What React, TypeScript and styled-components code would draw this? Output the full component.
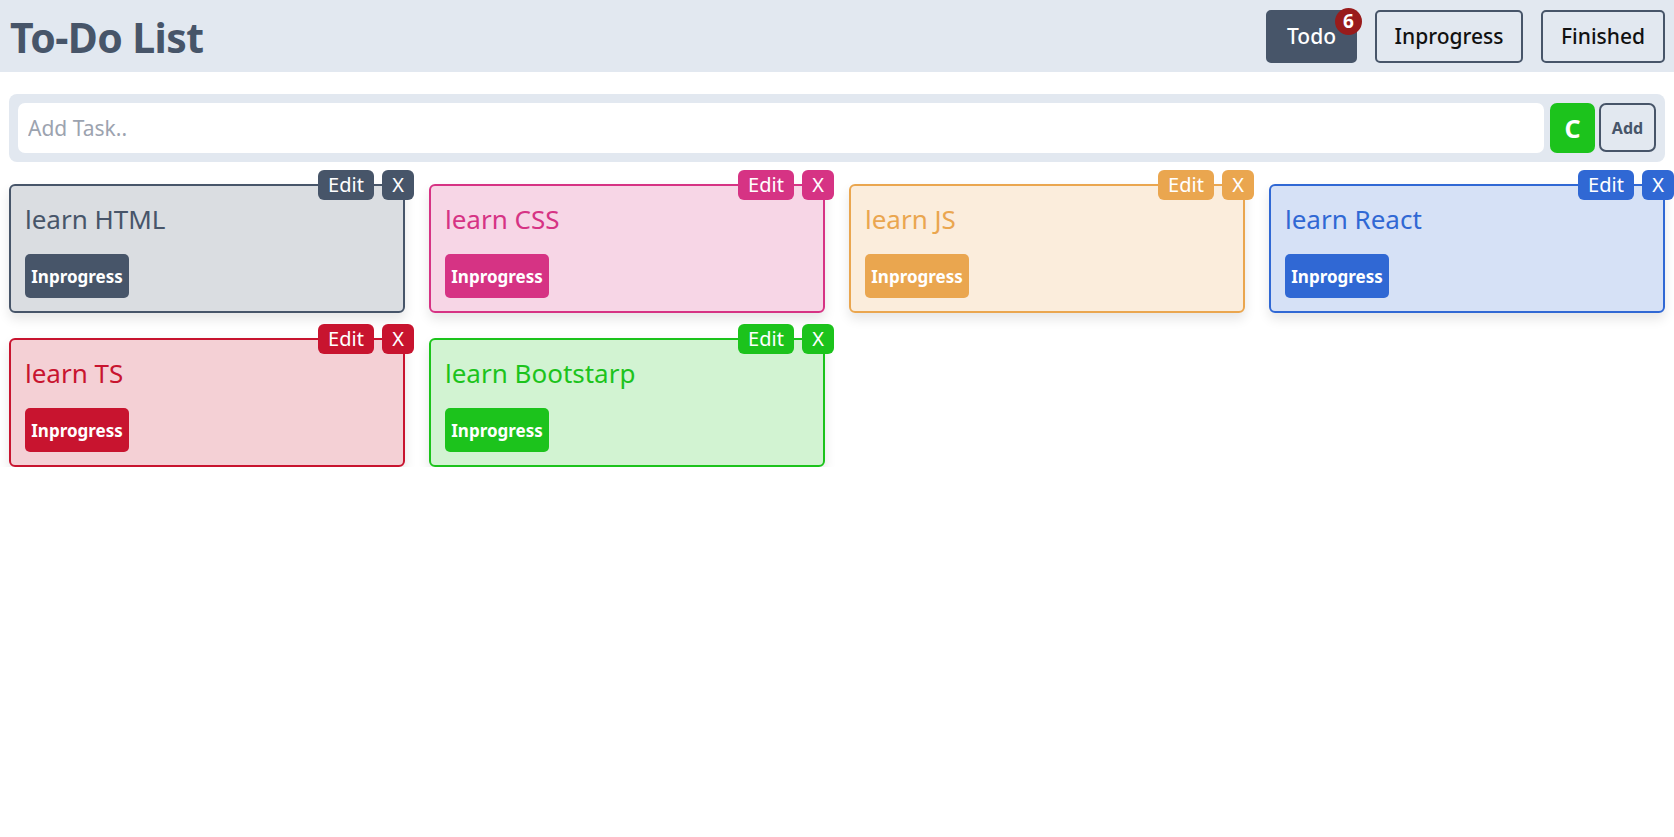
import React from "react";
import styled, { createGlobalStyle } from "styled-components";

const GlobalStyle = createGlobalStyle`
  * { box-sizing: border-box; }
  body {
    margin: 0;
    background: #ffffff;
    font-family: "Noto Sans", "Open Sans", Arial, sans-serif;
    color: #1f2937;
  }
`;

const Header = styled.header`
  height: 72px;
  background: #e2e8f0;
  display: flex;
  align-items: center;
  justify-content: space-between;
  padding: 0 9px 0 10px;
`;

const Title = styled.h1`
  margin: 0;
  font-size: 41px;
  font-weight: 700;
  color: #475569;
  letter-spacing: -0.6px;
  line-height: 1;
  padding-top: 2px;
`;

const Nav = styled.nav`
  display: flex;
  gap: 18px;
  align-items: center;
`;

const NavButton = styled.button<{ $active?: boolean; $w: number }>`
  position: relative;
  width: ${(p) => p.$w}px;
  height: 53px;
  border: 2px solid #475569;
  border-radius: 5px;
  background: ${(p) => (p.$active ? "#475569" : "transparent")};
  color: ${(p) => (p.$active ? "#ffffff" : "#111111")};
  font-family: inherit;
  font-size: 21px;
  font-weight: 500;
  padding: 0;
  display: flex;
  align-items: center;
  justify-content: center;
  cursor: pointer;
`;

const Badge = styled.span`
  position: absolute;
  top: -4px;
  right: -7px;
  width: 27px;
  height: 27px;
  border-radius: 50%;
  background: #991b1b;
  color: #fff;
  font-size: 19px;
  font-weight: 700;
  display: flex;
  align-items: center;
  justify-content: center;
  line-height: 1;
`;

const Main = styled.main`
  padding: 22px 9px 0 9px;
`;

const Form = styled.form`
  height: 68px;
  background: #e2e8f0;
  border-radius: 8px;
  padding: 9px;
  display: flex;
  align-items: stretch;
`;

const Input = styled.input`
  flex: 1;
  border: none;
  outline: none;
  border-radius: 7px;
  background: #ffffff;
  font-family: inherit;
  font-size: 21px;
  padding: 0 10px;
  color: #1f2937;
  &::placeholder {
    color: #9ca3af;
  }
`;

const ColorButton = styled.button`
  margin-left: 6px;
  width: 45px;
  border: none;
  border-radius: 7px;
  background: #1cc31c;
  color: #fff;
  font-family: inherit;
  font-size: 25px;
  font-weight: 700;
  padding: 0;
`;

const AddButton = styled.button`
  margin-left: 4px;
  width: 57px;
  height: 49px;
  border: 2px solid #475569;
  border-radius: 7px;
  background: #e2e8f0;
  color: #475569;
  font-family: inherit;
  font-size: 16px;
  font-weight: 700;
  padding: 0;
`;

const Grid = styled.section`
  margin-top: 22px;
  display: grid;
  grid-template-columns: repeat(4, 396px);
  column-gap: 24px;
  row-gap: 25px;
  align-items: start;
`;

const Card = styled.article<{ $c: string }>`
  position: relative;
  height: 129px;
  border: 2px solid ${(p) => p.$c};
  border-radius: 6px;
  background: ${(p) => p.$c}33;
  box-shadow: 0 6px 12px rgba(0, 0, 0, 0.1);
  padding: 14px 14px 13px 14px;
  display: flex;
  flex-direction: column;
  align-items: flex-start;
`;

const CardTitle = styled.h3<{ $c: string }>`
  margin: 0;
  font-size: 26px;
  font-weight: 400;
  line-height: 38px;
  color: ${(p) => p.$c};
`;

const StatusButton = styled.button<{ $c: string }>`
  margin-top: auto;
  width: 104px;
  height: 44px;
  border: none;
  border-radius: 5px;
  background: ${(p) => p.$c};
  color: #fff;
  font-family: inherit;
  font-size: 17px;
  font-weight: 700;
  padding: 0;
`;

const Actions = styled.div`
  position: absolute;
  top: -16px;
  right: -11px;
  display: flex;
  gap: 8px;
`;

const ActionButton = styled.button<{ $c: string; $w: number }>`
  width: ${(p) => p.$w}px;
  height: 30px;
  border: none;
  border-radius: 6px;
  background: ${(p) => p.$c};
  color: #fff;
  font-family: inherit;
  font-size: 20px;
  font-weight: 400;
  padding: 0;
  line-height: 1;
  display: flex;
  align-items: center;
  justify-content: center;
`;

type Task = { id: number; text: string; color: string };

const tasks: Task[] = [
  { id: 1, text: "learn HTML", color: "#475569" },
  { id: 2, text: "learn CSS", color: "#d63384" },
  { id: 3, text: "learn JS", color: "#eaa64f" },
  { id: 4, text: "learn React", color: "#3068d4" },
  { id: 5, text: "learn TS", color: "#c8142f" },
  { id: 6, text: "learn Bootstarp", color: "#1cc31c" },
];

export default function App() {
  return (
    <>
      <GlobalStyle />
      <Header>
        <Title>To-Do List</Title>
        <Nav>
          <NavButton $active $w={91}>
            Todo
            <Badge>6</Badge>
          </NavButton>
          <NavButton $w={148}>Inprogress</NavButton>
          <NavButton $w={124}>Finished</NavButton>
        </Nav>
      </Header>
      <Main>
        <Form onSubmit={(e) => e.preventDefault()}>
          <Input placeholder="Add Task.." />
          <ColorButton type="button">C</ColorButton>
          <AddButton type="submit">Add</AddButton>
        </Form>
        <Grid>
          {tasks.map((t) => (
            <Card key={t.id} $c={t.color}>
              <Actions>
                <ActionButton $c={t.color} $w={56}>Edit</ActionButton>
                <ActionButton $c={t.color} $w={32}>X</ActionButton>
              </Actions>
              <CardTitle $c={t.color}>{t.text}</CardTitle>
              <StatusButton $c={t.color}>Inprogress</StatusButton>
            </Card>
          ))}
        </Grid>
      </Main>
    </>
  );
}
